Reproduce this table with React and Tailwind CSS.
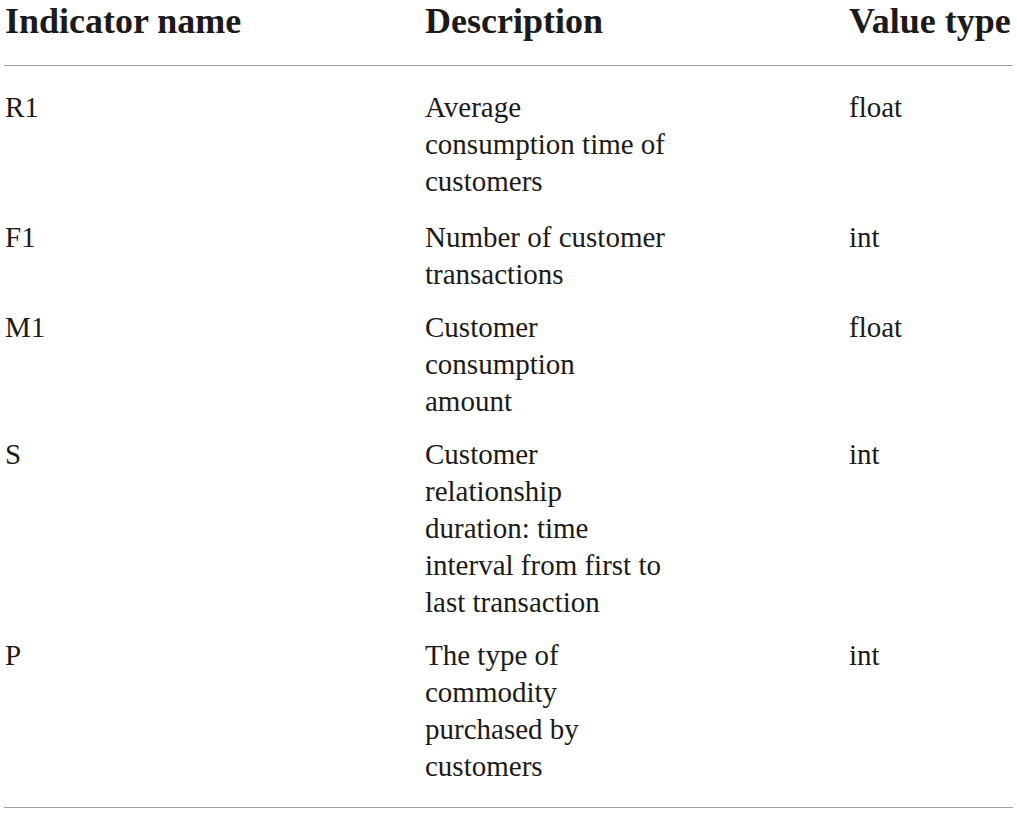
const rows = [
  { name: 'R1', desc: ['Average', 'consumption time of', 'customers'], type: 'float' },
  { name: 'F1', desc: ['Number of customer', 'transactions'], type: 'int' },
  { name: 'M1', desc: ['Customer', 'consumption', 'amount'], type: 'float' },
  { name: 'S', desc: ['Customer', 'relationship', 'duration: time', 'interval from first to', 'last transaction'], type: 'int' },
  { name: 'P', desc: ['The type of', 'commodity', 'purchased by', 'customers'], type: 'int' },
];

export default function App() {
  return (
    <div className="w-[1017px] h-[814px] bg-white overflow-hidden font-['Liberation_Serif',serif] text-[#1c1a1a]">
      <table className="ml-[4px] w-[1009px] border-collapse">
        <thead>
          <tr className="border-b-[1.5px] border-[#a3a3a3]">
            <th className="w-[421px] pl-[1px] pt-[1px] pb-[24px] text-left align-top text-[36px] leading-[40px] font-bold">
              Indicator name
            </th>
            <th className="w-[424px] pt-[1px] pb-[24px] text-left align-top text-[36px] leading-[40px] font-bold">
              Description
            </th>
            <th className="pt-[1px] pb-[24px] text-left align-top text-[36px] leading-[40px] font-bold whitespace-nowrap">
              Value type
            </th>
          </tr>
        </thead>
        <tbody className="border-b-[1.5px] border-[#a3a3a3]">
          {rows.map((r, i) => {
            const first = i === 0;
            const last = i === rows.length - 1;
            const pad = `${first ? 'pt-[23px] pb-[11px]' : 'pt-2'} ${last ? 'pb-[22px]' : ''} ${!first && !last ? 'pb-2' : ''}`;
            return (
              <tr key={r.name} className="text-[29px] leading-[37px]">
                <td className={`pl-[1px] align-top ${pad}`}>{r.name}</td>
                <td className={`align-top ${pad}`}>
                  {r.desc.map(line => (
                    <div key={line} className="whitespace-nowrap">{line}</div>
                  ))}
                </td>
                <td className={`align-top ${pad}`}>{r.type}</td>
              </tr>
            );
          })}
        </tbody>
      </table>
    </div>
  );
}
